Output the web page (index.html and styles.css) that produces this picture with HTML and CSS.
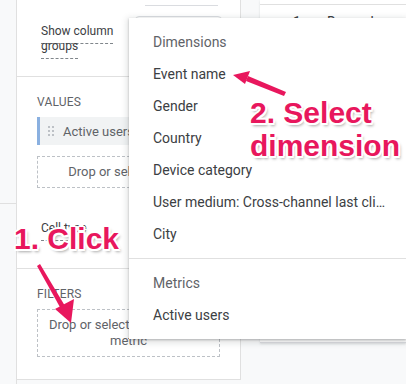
FILE: index.html
```html
<!DOCTYPE html>
<html lang="en">
<head>
    <meta charset="UTF-8">
    <title>Free form - dimensions</title>
    <link rel="stylesheet" href="styles.css">
</head>
<body>
    <div class="layout">
        <div class="rail">
            <div class="rail-top"></div>
        </div>
        <div class="panel">
            <div class="top-row">
                <div class="top-input"></div>
                <div class="top-select"></div>
            </div>
            <div class="setting-row">
                <div class="setting-wrap"><span class="setting-label">Show column groups</span></div>
            </div>
            <div class="section">
                <div class="section-title">VALUES</div>
                <div class="chip">
                    <span class="grip"><i></i><i></i><i></i><i></i><i></i><i></i></span>
                    <span class="chip-text">Active users</span>
                </div>
                <div class="drop-box">Drop or select metric</div>
                <div class="cell-row">
                    <span class="setting-label">Cell type</span>
                </div>
            </div>
            <div class="section section-last">
                <div class="section-title">FILTERS</div>
                <div class="drop-box drop-box-tall">Drop or select dimension or metric</div>
            </div>
        </div>
        <div class="gutter"></div>
        <div class="canvas">
            <div class="canvas-card">
                <div class="canvas-head"></div>
                <div class="canvas-row"><span>1</span><span>December</span></div>
            </div>
        </div>
    </div>

    <!-- dropdown opened from the filters box -->
    <div class="menu">
        <div class="menu-header">Dimensions</div>
        <div class="menu-item">Event name</div>
        <div class="menu-item">Gender</div>
        <div class="menu-item">Country</div>
        <div class="menu-item">Device category</div>
        <div class="menu-item">User medium: Cross-channel last cli…</div>
        <div class="menu-item">City</div>
        <div class="menu-divider"></div>
        <div class="menu-header">Metrics</div>
        <div class="menu-item">Active users</div>
    </div>

    <!-- tutorial annotations -->
    <svg class="arrows" width="406" height="384" viewBox="0 0 406 384">
        <polygon points="37,266 40,264 65,306 61,309" fill="#e8175d"/>
        <polygon points="71,323 55,309 74,299" fill="#e8175d"/>
        <polygon points="286,92 284,96 246,81 248,76" fill="#e8175d"/>
        <polygon points="233,75 250,71 245,84" fill="#e8175d"/>
    </svg>
    <div class="note note-click">1. Click</div>
    <div class="note note-select">2. Select<br>dimension</div>
</body>
</html>
```

FILE: styles.css
```css
body {
    margin: 0;
    width: 406px;
    height: 384px;
    overflow: hidden;
    position: relative;
    background: #f8f9fa;
    font-family: Roboto, "Liberation Sans", sans-serif;
    color: #3c4043;
}
.layout {
    display: flex;
    height: 384px;
}
.rail {
    width: 16px;
    border-right: 1px solid #e0e0e0;
}
.rail-top {
    height: 203px;
    border-bottom: 1px solid #e0e0e0;
}
.panel {
    width: 223px;
    height: 379px;
    background: #fff;
    border-right: 1px solid #e0e0e0;
    border-bottom: 1px solid #e0e0e0;
    overflow: hidden;
}
.top-row {
    position: relative;
    height: 23px;
}
.top-input {
    position: absolute;
    left: 128px;
    width: 73px;
    height: 5px;
    border-bottom: 1px solid #dadce0;
}
.top-select {
    position: absolute;
    left: 118px;
    top: 16px;
    width: 85px;
    height: 34px;
    border: 1px solid #dadce0;
    border-radius: 4px;
}
.setting-row {
    height: 53px;
    padding-left: 24px;
    border-bottom: 1px solid #e0e0e0;
}
.setting-wrap {
    width: 82px;
    line-height: 14px;
}
.setting-label {
    font-size: 12px;
    line-height: 14px;
    color: #3c4043;
    border-bottom: 1px dashed #80868b;
    padding-bottom: 5px;
}
.section {
    padding: 18px 20px 0;
    height: 173px;
    border-bottom: 1px solid #e0e0e0;
}
.section-last {
    height: auto;
    border-bottom: none;
}
.section-title {
    font-size: 12px;
    line-height: 14px;
    color: #5f6368;
    letter-spacing: 0.2px;
    margin-bottom: 8px;
}
.chip {
    display: flex;
    align-items: center;
    height: 28px;
    background: #f1f3f4;
    border-left: 3px solid #8ab0e0;
    margin-bottom: 11px;
}
.grip {
    display: grid;
    grid-template-columns: 2px 2px;
    gap: 2px;
    margin: 0 9px 0 8px;
}
.grip i {
    width: 2px;
    height: 2px;
    background: #bdc1c6;
}
.chip-text {
    font-size: 13px;
    color: #5f6368;
}
.drop-box {
    border: 1px dashed #bdc1c6;
    height: 30px;
    line-height: 30px;
    text-align: center;
    font-size: 13px;
    color: #5f6368;
}
.drop-box-tall {
    height: auto;
    line-height: 16px;
    padding: 7px 6px;
}
.cell-row {
    margin-top: 32px;
    padding-left: 4px;
    line-height: 14px;
}
.gutter {
    width: 19px;
    flex-shrink: 0;
}
.canvas {
    flex: 1;
}
.canvas-card {
    height: 342px;
    background: #fff;
    border-bottom: 1px solid #dadce0;
    box-shadow: 0 1px 2px rgba(60, 64, 67, 0.15);
}
.canvas-head {
    height: 4px;
    border-bottom: 1px solid #e0e0e0;
}
.canvas-row {
    display: flex;
    gap: 26px;
    padding: 9px 0 0 33px;
    font-size: 14px;
}
.menu {
    position: absolute;
    left: 129px;
    right: 0;
    top: 18px;
    padding: 8px 0;
    background: #fff;
    box-shadow: 0 2px 6px 2px rgba(60, 64, 67, 0.15), 0 1px 2px rgba(60, 64, 67, 0.3);
}
.menu-header,
.menu-item {
    height: 32px;
    line-height: 32px;
    padding-left: 24px;
    font-size: 14px;
    white-space: nowrap;
}
.menu-header {
    color: #5f6368;
}
.menu-item {
    color: #3c4043;
}
.menu-divider {
    height: 1px;
    background: #e0e0e0;
    margin: 8px 0;
}
.arrows {
    position: absolute;
    left: 0;
    top: 0;
}
.note {
    position: absolute;
    font-family: "Liberation Sans", Arial, sans-serif;
    font-weight: bold;
    font-size: 30px;
    line-height: 33px;
    color: #e8175d;
    white-space: nowrap;
    text-shadow:
        2px 0 0 #fff, -2px 0 0 #fff, 0 2px 0 #fff, 0 -2px 0 #fff,
        1.5px 1.5px 0 #fff, -1.5px 1.5px 0 #fff, 1.5px -1.5px 0 #fff, -1.5px -1.5px 0 #fff,
        2px 3px 3px rgba(0, 0, 0, 0.35);
}
.note-click {
    left: 14px;
    top: 222px;
}
.note-select {
    left: 250px;
    top: 96px;
}
```
